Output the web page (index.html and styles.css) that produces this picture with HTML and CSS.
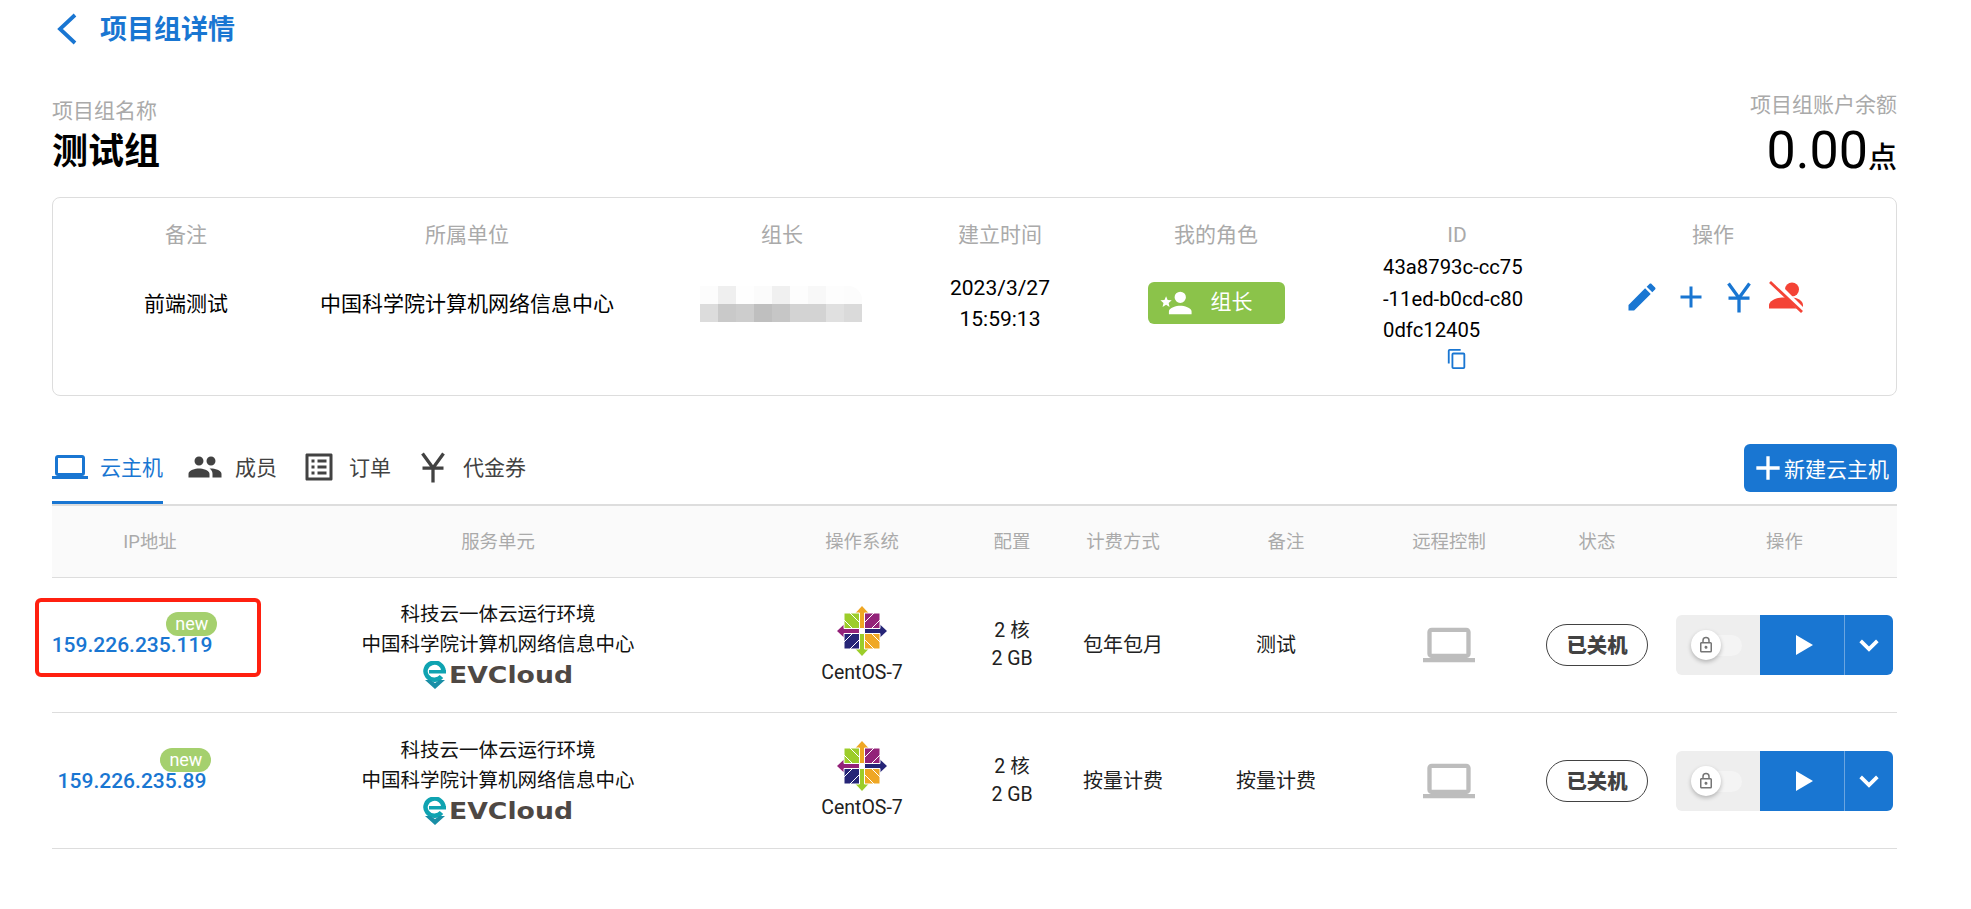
FILE: index.html
```html
<!DOCTYPE html>
<html lang="zh-CN">
<head>
<meta charset="utf-8">
<title>项目组详情</title>
<link rel="stylesheet" href="styles.css">
</head>
<body>
<svg class="defs" aria-hidden="true">
  <defs>
    <symbol id="i-laptop" viewBox="0 0 24 24"><path d="M4,6H20V16H4M20,18A2,2 0 0,0 22,16V6C22,4.89 21.1,4 20,4H4C2.89,4 2,4.89 2,6V16A2,2 0 0,0 4,18H0V20H24V18H20Z"/></symbol>
    <symbol id="i-yen" viewBox="0 0 24 24"><path class="yen" d="M5 3 12 12.700 19 3M5 12.700H19M12 12.700V22.300"/></symbol>
    <symbol id="i-plus" viewBox="0 0 24 24"><path d="M19,13H13V19H11V13H5V11H11V5H13V11H19V13Z"/></symbol>
    <symbol id="i-play" viewBox="0 0 24 24"><path d="M5 2 22 12 5 22Z"/></symbol>
    <symbol id="i-chev" viewBox="0 0 24 24"><path class="chev" d="M2 7 12 17 22 7"/></symbol>
    <symbol id="i-lock" viewBox="0 0 24 24"><path d="M12,17C10.89,17 10,16.1 10,15C10,13.89 10.89,13 12,13A2,2 0 0,1 14,15A2,2 0 0,1 12,17M18,20V10H6V20H18M18,8A2,2 0 0,1 20,10V20A2,2 0 0,1 18,22H6C4.89,22 4,21.1 4,20V10C4,8.89 4.89,8 6,8H7V6A5,5 0 0,1 12,1A5,5 0 0,1 17,6V8H18M12,3A3,3 0 0,0 9,6V8H15V6A3,3 0 0,0 12,3Z"/></symbol>
    <symbol id="i-centos" viewBox="0 0 50 50">
      <path fill="#efa724" d="M25 0 31.500 7H27V22H23V7H18.500Z"/>
      <path fill="#262577" d="M50 25 43 31.500V27H28V23H43V18.500Z"/>
      <path fill="#9ccd2a" d="M25 50 18.500 43H23V28H27V43H31.500Z"/>
      <path fill="#932279" d="M0 25 7 18.500V23H22V27H7V31.500Z"/>
      <g stroke="#fff" stroke-width="1">
        <path fill="#9ccd2a" d="M7 7H22.500V22.500H7Z"/>
        <path fill="#932279" d="M27.500 7H43V22.500H27.500Z"/>
        <path fill="#efa724" d="M27.500 27.500H43V43H27.500Z"/>
        <path fill="#262577" d="M7 27.500H22.500V43H7Z"/>
        <path fill="none" d="M13 7 22.500 16.500M7 14 16 23M37 7 27.500 16.500M43 14 34 23M13 43 22.500 33.500M7 36 16 27M37 43 27.500 33.500M43 36 34 27"/>
      </g>
    </symbol>
    <symbol id="i-pin" viewBox="0 0 24 28">
      <path fill="none" stroke="#0fa3b1" stroke-width="4.500" d="M18.500 15.500A9 8.500 0 1 1 20.500 10"/>
      <path fill="#0fa3b1" d="M6 9H23V12.500H6Z"/>
      <path fill="#1a8ea6" d="M2 19H7.500L12 22 16.500 19H22L12 28Z"/>
    </symbol>
  </defs>
</svg>

<main class="page">
  <header class="topbar">
    <svg class="back" viewBox="0 0 22 32"><path d="M19 2 4 16 19 30"/></svg>
    <h1 class="page-title">项目组详情</h1>
  </header>

  <section class="summary">
    <div>
      <div class="label name-label">项目组名称</div>
      <div class="group-name">测试组</div>
    </div>
    <div class="balance">
      <div class="label balance-label">项目组账户余额</div>
      <div class="amount">0.00<span class="unit">点</span></div>
    </div>
  </section>

  <section class="info-card">
    <div class="info-head">备注</div>
    <div class="info-head">所属单位</div>
    <div class="info-head">组长</div>
    <div class="info-head">建立时间</div>
    <div class="info-head">我的角色</div>
    <div class="info-head">ID</div>
    <div class="info-head">操作</div>

    <div class="info-cell">前端测试</div>
    <div class="info-cell">中国科学院计算机网络信息中心</div>
    <div class="info-cell">
      <div class="mosaic">
        <i class="m1"></i><i class="m2"></i><i class="m3"></i><i class="m4"></i><i class="m5"></i><i class="m6"></i><i class="m7"></i><i class="m8"></i><i class="m9"></i>
        <i class="n1"></i><i class="n2"></i><i class="n3"></i><i class="n4"></i><i class="n5"></i><i class="n6"></i><i class="n7"></i><i class="n8"></i><i class="n9"></i>
      </div>
    </div>
    <div class="info-cell info-date">2023/3/27<br>15:59:13</div>
    <div class="info-cell info-role">
      <div class="role">
        <svg class="role-icon" viewBox="0 0 24 24"><path d="M15,14C12.33,14 7,15.33 7,18V20H23V18C23,15.33 17.67,14 15,14M15,12A4,4 0 0,0 19,8A4,4 0 0,0 15,4A4,4 0 0,0 11,8A4,4 0 0,0 15,12M5,13.28L7.45,14.77L6.8,11.96L9,10.08L6.11,9.83L5,7.19L3.87,9.82L1,10.07L3.18,11.95L2.5,14.77L5,13.28Z"/></svg>
        <span>组长</span>
      </div>
    </div>
    <div class="info-id">
      <div class="id-text">43a8793c-cc75<br>-11ed-b0cd-c80<br>0dfc12405</div>
      <svg class="copy" viewBox="0 0 24 24"><path d="M19,21H8V7H19M19,5H8A2,2 0 0,0 6,7V21A2,2 0 0,0 8,23H19A2,2 0 0,0 21,21V7A2,2 0 0,0 19,5M16,1H4A2,2 0 0,0 2,3V17H4V3H16V1Z"/></svg>
    </div>
    <div class="info-cell info-actions">
      <svg class="act" viewBox="0 0 24 24"><path d="M20.71,7.04C21.1,6.65 21.1,6 20.71,5.63L18.37,3.29C18,2.9 17.35,2.9 16.96,3.29L15.12,5.12L18.87,8.87M3,17.25V21H6.75L17.81,9.93L14.06,6.18L3,17.25Z"/></svg>
      <svg class="act act-plus" viewBox="0 0 24 24"><use href="#i-plus"/></svg>
      <svg class="act act-yen" viewBox="0 0 24 24"><use href="#i-yen"/></svg>
      <svg class="act-off" viewBox="0 0 36 32">
        <circle cx="23" cy="8.500" r="7"/>
        <path d="M0 27.500V24C0 19.500 8 16.500 13 16.500H23C28 16.500 34 19.500 34 24V27.500Z"/>
        <path class="off-gap" d="M3 -1 36 32"/>
        <path class="off-line" d="M1 1 33 31"/>
      </svg>
    </div>
  </section>

  <section class="tabs-bar">
    <nav class="tabs">
      <a class="tab tab-active"><svg class="tab-icon"><use href="#i-laptop"/></svg>云主机</a>
      <a class="tab"><svg class="tab-icon" viewBox="0 0 24 24"><path d="M16 11c1.66 0 2.99-1.34 2.99-3S17.66 5 16 5c-1.66 0-3 1.34-3 3s1.34 3 3 3zm-8 0c1.66 0 2.99-1.34 2.99-3S9.66 5 8 5C6.34 5 5 6.34 5 8s1.34 3 3 3zm0 2c-2.33 0-7 1.17-7 3.5V19h14v-2.5c0-2.33-4.67-3.5-7-3.5zm8 0c-.29 0-.62.02-.97.05 1.16.84 1.97 1.97 1.97 3.45V19h6v-2.5c0-2.33-4.67-3.5-7-3.5z"/></svg>成员</a>
      <a class="tab"><svg class="tab-icon" viewBox="0 0 24 24"><path d="M19 5v14H5V5h14m1.1-2H3.9c-.5 0-.9.4-.9.9v16.2c0 .4.4.9.9.9h16.2c.4 0 .9-.5.9-.9V3.9c0-.5-.5-.9-.9-.9zM11 7h6v2h-6V7zm0 4h6v2h-6v-2zm0 4h6v2h-6zM7 7h2v2H7zm0 4h2v2H7zm0 4h2v2H7z"/></svg>订单</a>
      <a class="tab"><svg class="tab-icon tab-yen"><use href="#i-yen"/></svg>代金券</a>
    </nav>
    <button class="new-btn"><svg class="new-plus"><use href="#i-plus"/></svg>新建云主机</button>
  </section>

  <section class="vm-table">
    <div class="vm-row vm-head">
      <div>IP地址</div>
      <div>服务单元</div>
      <div>操作系统</div>
      <div>配置</div>
      <div>计费方式</div>
      <div class="head-note">备注</div>
      <div>远程控制</div>
      <div>状态</div>
      <div class="head-ops">操作</div>
    </div>

    <div class="vm-row vm-body">
      <div class="cell-ip">
        <a class="ip">159.226.235.119<span class="new-tag">new</span></a>
        <div class="highlight"></div>
      </div>
      <div class="cell-unit">
        <div>科技云一体云运行环境</div>
        <div>中国科学院计算机网络信息中心</div>
        <div class="evcloud"><svg class="ev-pin"><use href="#i-pin"/></svg><span>EVCloud</span></div>
      </div>
      <div class="cell-os"><svg class="centos"><use href="#i-centos"/></svg><div>CentOS-7</div></div>
      <div class="cell-conf">2 核<br>2 GB</div>
      <div class="cell-text">包年包月</div>
      <div class="cell-text">测试</div>
      <div class="cell-remote"><svg class="remote"><use href="#i-laptop"/></svg></div>
      <div class="cell-status"><span class="status">已关机</span></div>
      <div class="cell-ops">
        <div class="ops">
          <div class="ops-switch"><span class="track"></span><span class="knob"><svg class="lock"><use href="#i-lock"/></svg></span></div>
          <div class="ops-play"><svg class="play"><use href="#i-play"/></svg></div>
          <div class="ops-more"><svg class="chev-icon"><use href="#i-chev"/></svg></div>
        </div>
      </div>
    </div>

    <div class="vm-row vm-body">
      <div class="cell-ip">
        <a class="ip">159.226.235.89<span class="new-tag">new</span></a>
      </div>
      <div class="cell-unit">
        <div>科技云一体云运行环境</div>
        <div>中国科学院计算机网络信息中心</div>
        <div class="evcloud"><svg class="ev-pin"><use href="#i-pin"/></svg><span>EVCloud</span></div>
      </div>
      <div class="cell-os"><svg class="centos"><use href="#i-centos"/></svg><div>CentOS-7</div></div>
      <div class="cell-conf">2 核<br>2 GB</div>
      <div class="cell-text">按量计费</div>
      <div class="cell-text">按量计费</div>
      <div class="cell-remote"><svg class="remote"><use href="#i-laptop"/></svg></div>
      <div class="cell-status"><span class="status">已关机</span></div>
      <div class="cell-ops">
        <div class="ops">
          <div class="ops-switch"><span class="track"></span><span class="knob"><svg class="lock"><use href="#i-lock"/></svg></span></div>
          <div class="ops-play"><svg class="play"><use href="#i-play"/></svg></div>
          <div class="ops-more"><svg class="chev-icon"><use href="#i-chev"/></svg></div>
        </div>
      </div>
    </div>
  </section>
</main>
</body>
</html>
```

FILE: styles.css
```css
* { box-sizing: border-box; }

html, body { margin: 0; padding: 0; background: #fff; }

body {
  font-family: Roboto, "Noto Sans CJK SC", sans-serif;
  color: #000;
  overflow: hidden;
}

.defs { position: absolute; width: 0; height: 0; }

.yen { fill: none; stroke: currentColor; stroke-width: 2.2; }
.chev { fill: none; stroke: currentColor; stroke-width: 4.4; }

.page { width: 1971px; height: 909px; padding: 0 74px 0 52px; }

/* top bar */
.topbar { display: flex; align-items: center; height: 58px; padding-left: 4px; }
.back { width: 22px; height: 32px; fill: none; stroke: #1976d2; stroke-width: 3.8; }
.page-title { margin: 2px 0 0 22px; font-size: 27px; font-weight: 700; color: #1976d2; line-height: 58px; }

/* summary */
.summary { display: flex; justify-content: space-between; margin-top: 34px; height: 90px; }
.label { color: #aaa; font-size: 21px; }
.name-label { line-height: 38px; }
.group-name { font-size: 36px; font-weight: 700; line-height: 44px; }
.balance { text-align: right; }
.balance-label { line-height: 26px; }
.amount { font-size: 52px; line-height: 66px; color: #000; }
.unit { font-size: 29px; font-weight: 500; }

/* info card */
.info-card {
  display: grid;
  grid-template-columns: 264px 298px 332px 104px 328px 154px 358px;
  grid-template-rows: 31px 118px;
  row-gap: 1px;
  margin-top: 15px;
  height: 199px;
  padding: 22px 1px 0;
  border: 1px solid #ddd;
  border-radius: 8px;
}
.info-head { color: #aaa; font-size: 21px; line-height: 31px; text-align: center; }
.info-cell {
  display: flex;
  align-items: center;
  justify-content: center;
  padding-bottom: 12px;
  font-size: 21px;
  line-height: 31.5px;
  text-align: center;
}
.info-date { padding-bottom: 14px; }
.info-role { padding-bottom: 16px; }
.mosaic { display: grid; grid-template-columns: repeat(9, 18px); grid-auto-rows: 18px; margin-bottom: 2px; margin-left: -2px; }
.m1 { background: #fcfcfc; } .m2 { background: #efefef; } .m3 { background: #fefefe; }
.m4 { background: #fbfbfb; } .m5 { background: #f0f0f0; } .m6 { background: #fdfdfd; }
.m7 { background: #f8f8f8; } .m8 { background: #fdfdfd; } .m9 { background: #fcfcfc; border-top-right-radius: 14px; }
.n1 { background: #dcdcdc; } .n2 { background: #c9c9c9; } .n3 { background: #cdcdcd; }
.n4 { background: #bfbfbf; } .n5 { background: #c6c6c6; } .n6 { background: #d3d3d3; }
.n7 { background: #d3d3d3; } .n8 { background: #e0e0e0; } .n9 { background: #dadada; }
.role {
  display: flex;
  align-items: center;
  width: 137px;
  height: 42px;
  padding-left: 11px;
  background: #8bc34a;
  border-radius: 6px;
  color: #fff;
}
.role-icon { width: 34px; height: 34px; fill: #fff; margin-right: 18px; }
.info-id { display: flex; flex-direction: column; align-items: center; font-size: 20.3px; line-height: 31.5px; }
.id-text { width: 148px; white-space: nowrap; }
.copy { width: 22px; height: 22px; fill: #1976d2; margin-top: 1px; }
.info-actions { justify-content: flex-start; padding: 0 0 28px 90px; }
.act { width: 36px; height: 36px; fill: #1976d2; flex: none; }
.act-plus { margin-left: 12.5px; }
.act-yen { color: #1976d2; fill: none; margin-left: 12px; }
.act-off { width: 36px; height: 32px; margin-left: 12px; fill: #f44336; flex: none; }
.off-gap { fill: none; stroke: #fff; stroke-width: 5.5; }
.off-line { fill: none; stroke: #f44336; stroke-width: 2.8; }

/* tabs */
.tabs-bar {
  display: flex;
  justify-content: space-between;
  margin-top: 48px;
  height: 62px;
  border-bottom: 2px solid #ddd;
}
.tabs { display: flex; gap: 24px; height: 60px; }
.tab {
  display: flex;
  align-items: flex-start;
  gap: 12px;
  height: 60px;
  padding-top: 6px;
  font-size: 21px;
  line-height: 36px;
  color: #424242;
}
.tab-icon { width: 36px; height: 36px; margin-top: -1px; fill: currentColor; flex: none; }
.tab-yen { fill: none; }
.tab-active { color: #1976d2; border-bottom: 3px solid #1976d2; }
.new-btn {
  display: flex;
  align-items: center;
  width: 153px;
  height: 48px;
  padding: 0 0 0 8px;
  border: 0;
  border-radius: 6px;
  background: #1976d2;
  color: #fff;
  font: 21px Roboto, "Noto Sans CJK SC", sans-serif;
}
.new-plus { width: 40px; height: 40px; fill: #fff; margin-right: -4px; margin-left: -4px; }

/* table */
.vm-row { display: grid; grid-template-columns: 196px 500px 228px 72px 150px 156px 190px 106px 247px; }
.vm-head {
  height: 72px;
  padding-bottom: 4px;
  align-items: center;
  background: #fafafa;
  border-bottom: 1px solid #ddd;
  color: #aaa;
  font-size: 18.4px;
  text-align: center;
}
.head-note { padding-left: 20px; }
.head-ops { padding-left: 22px; }
.vm-body {
  height: 135px;
  align-items: center;
  border-bottom: 1px solid #ddd;
  font-size: 20px;
  text-align: center;
  color: #212121;
}
.vm-body + .vm-body { height: 136px; }
.cell-ip { position: relative; height: 100%; display: flex; align-items: center; justify-content: center; padding-right: 36px; }
.ip { position: relative; font-size: 21px; font-weight: 500; line-height: 28px; color: #1976d2; }
.new-tag {
  position: absolute;
  right: -5px;
  top: -19px;
  width: 51px;
  height: 24px;
  border-radius: 12px;
  background: #a5d06e;
  color: #fff;
  font-size: 18px;
  font-weight: 400;
  line-height: 24px;
  text-align: center;
}
.highlight {
  position: absolute;
  left: -17px;
  top: 20px;
  width: 226px;
  height: 79px;
  border: 4px solid #ff2010;
  border-radius: 6px;
}
.cell-unit { font-size: 19.5px; line-height: 30px; color: #111; }
.evcloud { display: flex; align-items: center; justify-content: center; height: 30px; }
.ev-pin { width: 24px; height: 28px; margin-right: 2px; }
.evcloud span {
  display: inline-block;
  margin-right: 17px;
  font: 700 23px/28px "DejaVu Sans", sans-serif;
  color: #4e4844;
  transform: scaleX(1.16);
  transform-origin: left center;
}
.cell-os { font-size: 19.5px; line-height: 24px; }
.centos { display: block; width: 50px; height: 50px; margin: 0 auto 5px; }
.cell-conf { font-size: 19.5px; line-height: 28px; }
.cell-text { font-size: 20px; padding-bottom: 3px; }
.remote { display: block; width: 52px; height: 52px; margin: 0 auto; fill: #bdbdbd; }
.cell-status { height: 42px; }
.status {
  display: block;
  width: 102px;
  height: 42px;
  margin: 0 auto;
  border: 1px solid #424242;
  border-radius: 21px;
  color: #424242;
  font-size: 20.4px;
  font-weight: 900;
  line-height: 42px;
}
.cell-ops { display: flex; justify-content: flex-end; padding-right: 4px; }
.ops { display: flex; width: 217px; height: 60px; border-radius: 6px; overflow: hidden; }
.ops-switch { position: relative; width: 84px; background: #eee; }
.track { position: absolute; left: 30px; top: 20px; width: 36px; height: 21px; border-radius: 11px; background: #f4f4f4; }
.knob {
  position: absolute;
  left: 15px;
  top: 15px;
  display: flex;
  align-items: center;
  justify-content: center;
  width: 30px;
  height: 30px;
  border-radius: 50%;
  background: #fff;
  box-shadow: 0 2px 4px rgba(0, 0, 0, .25);
}
.lock { width: 18px; height: 18px; fill: #757575; }
.ops-play, .ops-more { display: flex; align-items: center; justify-content: center; background: #1976d2; }
.ops-play { width: 85px; border-right: 1px solid #6aa5e0; padding-left: 2px; }
.ops-more { width: 48px; color: #fff; }
.play { width: 24px; height: 24px; fill: #fff; }
.chev-icon { width: 20px; height: 20px; fill: none; }
```
